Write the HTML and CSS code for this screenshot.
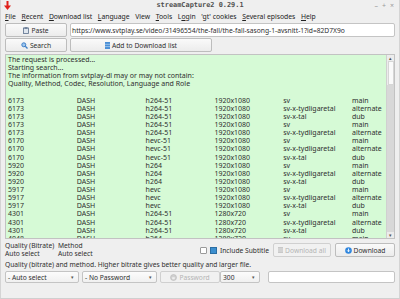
FILE: index.html
```html
<!DOCTYPE html>
<html lang="en">
<head>
    <meta charset="UTF-8">
    <title>streamCapture2 0.29.1</title>
    <link rel="stylesheet" href="styles.css">
</head>
<body>
<div class="window">
    <!-- Title bar -->
    <div class="titlebar">
        <svg class="app-icon" width="7" height="9" viewBox="0 0 7 9">
            <rect x="2.5" y="0" width="2" height="5" fill="#e0201a"/>
            <polygon points="0,4.5 7,4.5 3.5,9" fill="#e0201a"/>
        </svg>
        <span class="title">streamCapture2 0.29.1</span>
        <div class="controls">
            <span>&#8211;</span><span>+</span><span>&#215;</span>
        </div>
    </div>

    <!-- Menu -->
    <div class="menubar">
        <span><u>F</u>ile</span>
        <span><u>R</u>ecent</span>
        <span><u>D</u>ownload list</span>
        <span><u>L</u>anguage</span>
        <span>View</span>
        <span><u>T</u>ools</span>
        <span>L<u>o</u>gin</span>
        <span>'<u>g</u>t' cookies</span>
        <span><u>S</u>everal episodes</span>
        <span><u>H</u>elp</span>
    </div>

    <div class="row">
        <button class="btn btn-side">
            <svg width="6" height="7" viewBox="0 0 6 7"><rect x="0.5" y="1" width="5" height="5.5" fill="#dfe6ee" stroke="#5a6f8c" stroke-width="0.8"/><rect x="1.5" y="0.3" width="3" height="1.4" fill="#5a6f8c"/></svg>
            Paste
        </button>
        <div class="input url">https://www.svtplay.se/video/31496554/the-fall/the-fall-sasong-1-avsnitt-1?id=82D7X9o</div>
    </div>
    <div class="row">
        <button class="btn btn-side">
            <svg width="7" height="7" viewBox="0 0 7 7"><circle cx="2.8" cy="2.8" r="2" fill="#9fc8f0" stroke="#3f7fc6" stroke-width="1"/><line x1="4.3" y1="4.3" x2="6.5" y2="6.5" stroke="#3f7fc6" stroke-width="1.3"/></svg>
            Search
        </button>
        <button class="btn btn-add">
            <svg width="5" height="7" viewBox="0 0 5 7"><rect x="0" y="0" width="5" height="7" fill="#4b8fd6"/><line x1="0" y1="2.3" x2="5" y2="2.3" stroke="#cfe3f7" stroke-width="0.6"/><line x1="0" y1="4.6" x2="5" y2="4.6" stroke="#cfe3f7" stroke-width="0.6"/></svg>
            Add to Download list
        </button>
    </div>

    <!-- Output -->
    <div class="output">
        <div class="text">
            <div>The request is processed...</div>
            <div>Starting search...</div>
            <div>The information from svtplay-dl may or may not contain:</div>
            <div>Quality, Method, Codec, Resolution, Language and Role</div>
            <div>&nbsp;</div>
            <div class="grid">
                <span>6173</span><span>DASH</span><span>h264-51</span><span>1920x1080</span><span>sv</span><span>main</span>
                <span>6173</span><span>DASH</span><span>h264-51</span><span>1920x1080</span><span>sv-x-tydligaretal</span><span>alternate</span>
                <span>6173</span><span>DASH</span><span>h264-51</span><span>1920x1080</span><span>sv-x-tal</span><span>dub</span>
                <span>6173</span><span>DASH</span><span>h264-51</span><span>1920x1080</span><span>sv</span><span>main</span>
                <span>6173</span><span>DASH</span><span>h264-51</span><span>1920x1080</span><span>sv-x-tydligaretal</span><span>alternate</span>
                <span>6170</span><span>DASH</span><span>hevc-51</span><span>1920x1080</span><span>sv</span><span>main</span>
                <span>6170</span><span>DASH</span><span>hevc-51</span><span>1920x1080</span><span>sv-x-tydligaretal</span><span>alternate</span>
                <span>6170</span><span>DASH</span><span>hevc-51</span><span>1920x1080</span><span>sv-x-tal</span><span>dub</span>
                <span>5920</span><span>DASH</span><span>h264</span><span>1920x1080</span><span>sv</span><span>main</span>
                <span>5920</span><span>DASH</span><span>h264</span><span>1920x1080</span><span>sv-x-tydligaretal</span><span>alternate</span>
                <span>5920</span><span>DASH</span><span>h264</span><span>1920x1080</span><span>sv-x-tal</span><span>dub</span>
                <span>5917</span><span>DASH</span><span>hevc</span><span>1920x1080</span><span>sv</span><span>main</span>
                <span>5917</span><span>DASH</span><span>hevc</span><span>1920x1080</span><span>sv-x-tydligaretal</span><span>alternate</span>
                <span>5917</span><span>DASH</span><span>hevc</span><span>1920x1080</span><span>sv-x-tal</span><span>dub</span>
                <span>4301</span><span>DASH</span><span>h264-51</span><span>1280x720</span><span>sv</span><span>main</span>
                <span>4301</span><span>DASH</span><span>h264-51</span><span>1280x720</span><span>sv-x-tydligaretal</span><span>alternate</span>
                <span>4301</span><span>DASH</span><span>h264-51</span><span>1280x720</span><span>sv-x-tal</span><span>dub</span>
                <span>4048</span><span>DASH</span><span>h264</span><span>1280x720</span><span>sv</span><span>main</span>
            </div>
        </div>
        <div class="scrollbar">
            <div class="arrow">&#9652;</div>
            <div class="thumb"></div>
            <div class="track"></div>
            <div class="arrow">&#9662;</div>
        </div>
    </div>

    <!-- Bottom controls -->
    <div class="options">
        <div class="info">
            <div class="info-col">
                <div>Quality (Bitrate)</div>
                <div>Auto select</div>
            </div>
            <div class="info-col">
                <div>Method</div>
                <div>Auto select</div>
            </div>
        </div>
        <div class="actions">
            <span class="checkbox"></span>
            <span class="sub-icon"></span>
            <span class="label">Include Subtitle</span>
            <button class="btn btn-all" disabled>
                <svg width="5" height="6" viewBox="0 0 5 6"><rect x="0" y="0" width="5" height="6" fill="#c8c8c8"/><line x1="0" y1="2" x2="5" y2="2" stroke="#eee" stroke-width="0.6"/><line x1="0" y1="4" x2="5" y2="4" stroke="#eee" stroke-width="0.6"/></svg>
                Download all
            </button>
            <button class="btn btn-dl">
                <svg width="7" height="7" viewBox="0 0 7 7"><circle cx="3.5" cy="3.5" r="3.3" fill="#2f86de"/><path d="M3.5 1.6 V4.6 M2.2 3.4 L3.5 4.8 L4.8 3.4" stroke="#fff" stroke-width="0.9" fill="none"/></svg>
                Download
            </button>
        </div>
    </div>
    <div class="hint">Quality (bitrate) and method. Higher bitrate gives better quality and larger file.</div>
    <div class="row last">
        <div class="combo c-auto">- Auto select<span class="caret">&#9662;</span></div>
        <div class="combo c-pass">- No Password<span class="caret">&#9662;</span></div>
        <button class="btn btn-pass" disabled>
            <svg width="7" height="7" viewBox="0 0 7 7"><circle cx="3.5" cy="3.5" r="3" fill="#d0d0d0" stroke="#b8b8b8" stroke-width="0.6"/><rect x="2.2" y="3.2" width="2.6" height="2" fill="#eee"/></svg>
            Password
        </button>
        <div class="combo c-num">300<span class="caret">&#9662;</span></div>
        <div class="input empty"></div>
    </div>
</div>
</body>
</html>
```
FILE: styles.css
```css
body {
    margin: 0;
    padding: 0;
    font-family: "Noto Sans", sans-serif;
    font-size: 6.7px;
    color: #2e2e2e;
    background-color: #e9e9e9;
}

.window {
    width: 400px;
    height: 299px;
    box-sizing: border-box;
    background-color: #efefef;
    border-left: 1px solid #d4d4d4;
    border-right: 1px solid #d4d4d4;
    border-bottom: 1px solid #cfcfcf;
    display: flex;
    flex-direction: column;
    overflow: hidden;
    white-space: nowrap;
}

/* Title bar */
.titlebar {
    height: 10px;
    display: flex;
    align-items: center;
    position: relative;
    padding: 0 2px;
}

.app-icon {
    margin-left: 1px;
}

.title {
    position: absolute;
    left: 0;
    right: 0;
    text-align: center;
    font-family: "DejaVu Sans Mono", monospace;
    font-weight: bold;
    font-size: 6.9px;
    color: #505050;
    top: 1px;
}

.controls {
    margin-left: auto;
    display: flex;
    gap: 4px;
    color: #9a9a9a;
    font-size: 7px;
    padding-right: 3px;
}

/* Menu */
.menubar {
    height: 12px;
    display: flex;
    align-items: center;
    gap: 5.6px;
    padding-left: 4px;
    font-size: 6.8px;
    color: #222;
}

.menubar u {
    text-decoration-thickness: 0.6px;
    text-underline-offset: 1px;
}

/* Rows */
.row {
    display: flex;
    gap: 3px;
    padding: 0 4px;
    margin-top: 1px;
    height: 14px;
    align-items: stretch;
}

.btn {
    font-family: "Noto Sans", sans-serif;
    font-size: 6.7px;
    color: #2e2e2e;
    background: linear-gradient(#fafafa, #ececec);
    border: 1px solid #bdbdbd;
    border-radius: 2px;
    display: flex;
    align-items: center;
    justify-content: center;
    gap: 2px;
    padding: 0;
}

.btn:disabled {
    color: #b4b4b4;
    background: #f1f1f1;
    border-color: #d0d0d0;
}

.btn-side {
    width: 62px;
}

.btn-add {
    width: 142px;
}

.input {
    background-color: #fff;
    border: 1px solid #c4c4c4;
    border-radius: 2px;
    box-sizing: border-box;
}

.url {
    flex: 1;
    display: flex;
    align-items: center;
    padding-left: 1px;
    font-size: 6.7px;
    overflow: hidden;
}

/* Output area */
.output {
    margin: 2px 4px 0 4px;
    height: 185px;
    border: 1px solid #c2c2c2;
    background-color: #d6fad6;
    display: flex;
    box-sizing: border-box;
    overflow: hidden;
}

.text {
    flex: 1;
    padding: 1px 0 0 2px;
    line-height: 8.12px;
    font-size: 7px;
    overflow: hidden;
}

.grid {
    display: grid;
    grid-template-columns: 68.8px 68.8px 68.8px 68.8px 68.8px auto;
}

.scrollbar {
    width: 7px;
    background-color: #ececec;
    border-left: 1px solid #d0d0d0;
    display: flex;
    flex-direction: column;
}

.scrollbar .arrow {
    height: 6px;
    font-size: 5px;
    line-height: 6px;
    text-align: center;
    color: #555;
}

.scrollbar .thumb {
    height: 22px;
    background-color: #fafafa;
    border: 1px solid #d6d6d6;
    margin: 0 0.5px;
}

.scrollbar .track {
    flex: 1;
    background-color: #d8d8d8;
}

/* Options */
.options {
    display: flex;
    align-items: center;
    padding: 3px 4px 0 4px;
    height: 16px;
}

.info {
    display: flex;
    gap: 8px;
    line-height: 8px;
}

.info-col:first-child {
    width: 45px;
}

.actions {
    margin-left: auto;
    display: flex;
    align-items: center;
    height: 14px;
}

.checkbox {
    width: 5px;
    height: 5px;
    border: 1px solid #9a9a9a;
    background-color: #fff;
    border-radius: 1px;
}

.sub-icon {
    width: 5px;
    height: 5px;
    background-color: #3c8fcf;
    border: 0.5px solid #2b6ea3;
    margin-left: 3px;
}

.label {
    margin-left: 3px;
    margin-right: 4px;
}

.btn-all {
    width: 58px;
    height: 14px;
    margin-right: 4px;
}

.btn-dl {
    width: 60px;
    height: 14px;
}

.hint {
    padding: 2px 4px 0 4px;
    line-height: 9px;
}

.row.last {
    margin-top: 2px;
    height: 12px;
}

.combo {
    background: linear-gradient(#fcfcfc, #f0f0f0);
    border: 1px solid #c4c4c4;
    border-radius: 2px;
    display: flex;
    align-items: center;
    padding-left: 2px;
    position: relative;
    box-sizing: border-box;
}

.caret {
    margin-left: auto;
    margin-right: 4px;
    font-size: 5px;
    color: #555;
}

.c-auto {
    width: 74px;
}

.c-pass {
    width: 75px;
}

.btn-pass {
    width: 60px;
}

.c-num {
    width: 40px;
    margin-left: -3px;
}

.empty {
    flex: 1;
    margin-left: 5px;
}
```
